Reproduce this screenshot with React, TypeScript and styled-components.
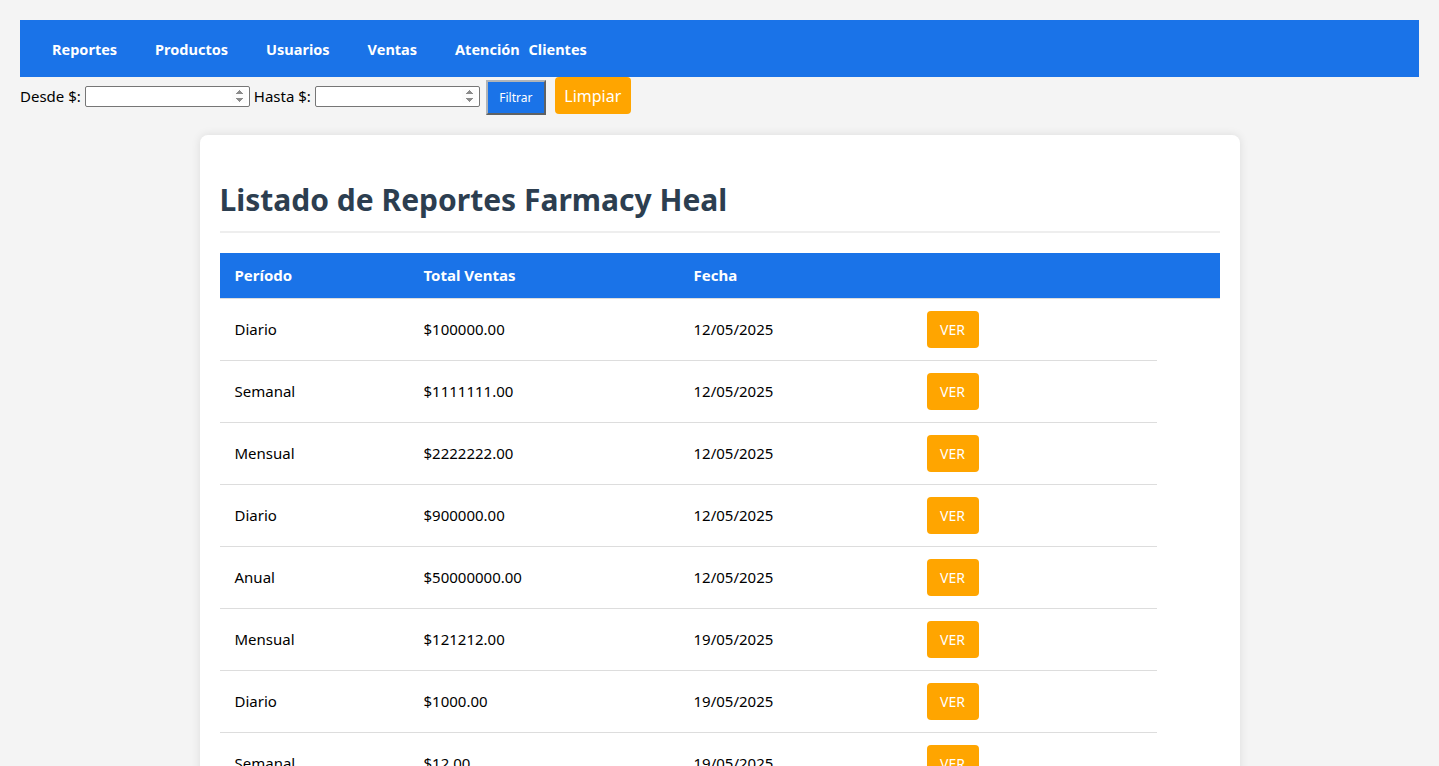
import React from "react";
import styled, { createGlobalStyle } from "styled-components";

const Global = createGlobalStyle`
  html, body { margin: 0; padding: 0; }
  body {
    background: #f4f4f4;
    padding: 20px;
    font-family: "Segoe UI", "Noto Sans", "Open Sans", sans-serif;
    color: #000;
  }
  * { box-sizing: border-box; }
`;

const Nav = styled.nav`
  background: #1a73e8;
  height: 57px;
  display: flex;
  align-items: center;
  gap: 38px;
  padding-left: 32px;
`;

const NavLink = styled.a`
  color: #fff;
  font-weight: 700;
  font-size: 14.5px;
  text-decoration: none;
  word-spacing: 5px;
`;

const FilterBar = styled.div`
  display: flex;
  align-items: center;
  gap: 4px;
  font-size: 15px;
  height: 38px;
`;

const Label = styled.label`
  font-size: 15px;
`;

const NumInput = styled.input`
  width: 165px;
  height: 21px;
  border: 1px solid #767676;
  border-radius: 2px;
  padding: 1px 2px;
  &::-webkit-inner-spin-button { opacity: 1; }
`;

const FilterBtn = styled.button`
  background: #1a73e8;
  color: #fff;
  font-size: 12px;
  font-family: inherit;
  width: 60px;
  height: 35px;
  border: 2px outset #b0b4b8;
  margin-left: 2px;
  align-self: flex-end;
`;

const OrangeBtn = styled.button<{ $big?: boolean }>`
  background: #ffa500;
  color: #fff;
  border: none;
  border-radius: 4px;
  font-family: inherit;
  font-size: ${(p) => (p.$big ? "16px" : "14px")};
  width: ${(p) => (p.$big ? "76px" : "52px")};
  height: 37px;
  cursor: pointer;
`;

const ClearBtn = styled(OrangeBtn)`
  margin-left: 5px;
  align-self: flex-start;
`;

const Card = styled.section`
  max-width: 1040px;
  margin: 20px auto 0;
  background: #fff;
  border-radius: 8px;
  box-shadow: 0 0 10px rgba(0, 0, 0, 0.1);
  padding: 20px;
`;

const Title = styled.h1`
  margin: 25px 0 20px;
  font-size: 30px;
  font-weight: 700;
  color: #2c3e50;
  padding-bottom: 10px;
  border-bottom: 2px solid #eee;
  line-height: 1.35;
`;

const cols = "189px 270px 233px 245px";

const HeadRow = styled.div`
  display: grid;
  grid-template-columns: ${cols} 63px;
  background: #1a73e8;
  height: 46px;
  align-items: center;
  color: #fff;
  font-weight: 700;
  font-size: 15px;
  border-bottom: 1px solid #ddd;
`;

const Row = styled.div`
  display: grid;
  grid-template-columns: ${cols};
  width: 937px;
  height: 62px;
  align-items: center;
  font-size: 15px;
  border-bottom: 1px solid #ddd;
`;

const Cell = styled.div`
  padding: 0 15px;
`;

const rows = [
  ["Diario", "$100000.00", "12/05/2025"],
  ["Semanal", "$1111111.00", "12/05/2025"],
  ["Mensual", "$2222222.00", "12/05/2025"],
  ["Diario", "$900000.00", "12/05/2025"],
  ["Anual", "$50000000.00", "12/05/2025"],
  ["Mensual", "$121212.00", "19/05/2025"],
  ["Diario", "$1000.00", "19/05/2025"],
  ["Semanal", "$12.00", "19/05/2025"],
];

export default function App() {
  return (
    <>
      <Global />
      <Nav>
        <NavLink href="#">Reportes</NavLink>
        <NavLink href="#">Productos</NavLink>
        <NavLink href="#">Usuarios</NavLink>
        <NavLink href="#">Ventas</NavLink>
        <NavLink href="#">Atención Clientes</NavLink>
      </Nav>
      <FilterBar>
        <Label>Desde $:</Label>
        <NumInput type="number" />
        <Label>Hasta $:</Label>
        <NumInput type="number" />
        <FilterBtn>Filtrar</FilterBtn>
        <ClearBtn $big>Limpiar</ClearBtn>
      </FilterBar>
      <Card>
        <Title>Listado de Reportes Farmacy Heal</Title>
        <HeadRow>
          <Cell>Período</Cell>
          <Cell>Total Ventas</Cell>
          <Cell>Fecha</Cell>
          <Cell />
        </HeadRow>
        {rows.map((r, i) => (
          <Row key={i}>
            <Cell>{r[0]}</Cell>
            <Cell>{r[1]}</Cell>
            <Cell>{r[2]}</Cell>
            <Cell>
              <OrangeBtn>VER</OrangeBtn>
            </Cell>
          </Row>
        ))}
      </Card>
    </>
  );
}
